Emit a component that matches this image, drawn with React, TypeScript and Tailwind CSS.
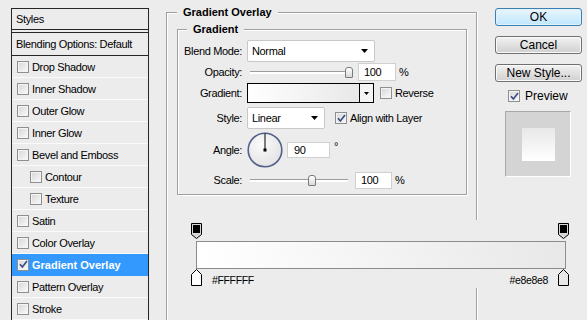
import React from 'react';

type StyleItem = { label: string; indent?: boolean; checked?: boolean; active?: boolean };

const styleItems: StyleItem[] = [
  { label: 'Drop Shadow' },
  { label: 'Inner Shadow' },
  { label: 'Outer Glow' },
  { label: 'Inner Glow' },
  { label: 'Bevel and Emboss' },
  { label: 'Contour', indent: true },
  { label: 'Texture', indent: true },
  { label: 'Satin' },
  { label: 'Color Overlay' },
  { label: 'Gradient Overlay', checked: true, active: true },
  { label: 'Pattern Overlay' },
  { label: 'Stroke' },
];

const Check = ({ checked = false }: { checked?: boolean }) => (
  <span className="flex h-[12px] w-[12px] shrink-0 items-center justify-center border border-[#8e8f8f] bg-linear-to-br from-[#d6d6d6] to-[#fbfbfb] shadow-[inset_0_0_0_1px_#f4f4f4]">
    {checked && (
      <svg width="9" height="9" viewBox="0 0 9 9">
        <path d="M1 4.2L3.4 7L8 1" fill="none" stroke="#3b4d84" strokeWidth="1.7" />
      </svg>
    )}
  </span>
);

const Arrow = () => (
  <svg width="7" height="4" viewBox="0 0 7 4">
    <path d="M0 0H7L3.5 4Z" fill="#000" />
  </svg>
);

// slider: left track, thumb, right track
const Slider = ({ left, right }: { left: string; right: string }) => (
  <div className="ml-[3px] flex h-[12px] items-center">
    <div className={`h-[3px] border-t border-[#9c9c9c] bg-white ${left}`} />
    <div className="h-[11px] w-[8px] shrink-0 rounded-t-[3px] rounded-b-[1px] border border-[#7a7a7a] bg-linear-to-b from-white to-[#d9d9d9]" />
    <div className={`h-[3px] border-t border-[#9c9c9c] bg-white ${right}`} />
  </div>
);

const TopStop = () => (
  <svg width="11" height="16" viewBox="0 0 11 16">
    <path d="M0.5 0.5H10.5V11.5L5.5 15.5L0.5 11.5Z" fill="#d8d8d8" stroke="#000" />
    <rect x="2" y="2" width="7" height="8" fill="#000" />
  </svg>
);

const BottomStop = ({ fill }: { fill: string }) => (
  <svg width="11" height="17" viewBox="0 0 11 17">
    <path d="M5.5 0.5L10.5 5.5V16.5H0.5V5.5Z" fill={fill} stroke="#000" />
  </svg>
);

const Button = ({ children, primary = false }: { children: React.ReactNode; primary?: boolean }) => (
  <div
    className={
      primary
        ? 'flex h-[18px] w-[87px] items-center justify-center rounded-[3px] border border-[#3c7fb1] bg-linear-to-b from-[#eaf6fd] to-[#bee6fd] text-[12px] tracking-normal shadow-[inset_0_0_0_1px_#dff2fc]'
        : 'flex h-[18px] w-[87px] items-center justify-center rounded-[3px] border border-[#707070] bg-linear-to-b from-[#f2f2f2] to-[#d0d0d0] text-[12px] tracking-normal shadow-[inset_0_0_0_1px_#fafafa]'
    }
  >
    {children}
  </div>
);

export default function App() {
  return (
    <div className="flex h-[320px] w-[587px] overflow-hidden bg-[#ececec] font-['Liberation_Sans',Arial,sans-serif] text-[11px] leading-[14px] tracking-[-0.35px] text-black">
      {/* styles list */}
      <aside className="w-[160px] shrink-0 pl-[11px] pt-[8px]">
        <div className="w-[138px] border-x border-t border-[#262626]">
          <div className="flex h-[21px] items-center border-b border-[#262626] pl-[4px]">Styles</div>
          <div className="mt-[2px] flex h-[24px] items-center border-y border-[#262626] pl-[4px]">
            Blending Options: Default
          </div>
          {styleItems.map((s) => (
            <div
              key={s.label}
              className={`flex h-[22px] items-center gap-[3px] border-b ${s.indent ? 'pl-[18px]' : 'pl-[5px]'} ${
                s.active ? 'border-[#3399ff] bg-[#3399ff] font-bold tracking-normal text-white' : 'border-[#fafafa]'
              }`}
            >
              <Check checked={s.checked} />
              <span>{s.label}</span>
            </div>
          ))}
        </div>
      </aside>

      <div className="flex flex-1 flex-col">
        <div className="flex h-[220px] shrink-0">
          <div className="w-[335px] shrink-0 pl-[6px] pt-[12px]">
            <section className="flex h-[208px] w-[311px] flex-col border-x border-t border-[#a0a0a0] shadow-[inset_1px_1px_0_#fff,1px_0_0_#fff]">
              <h2 className="-mt-[8px] ml-[10px] w-fit bg-[#ececec] px-[6px] font-bold tracking-normal">Gradient Overlay</h2>
              <div className="ml-[10px] mt-[10px] flex h-[166px] w-[290px] flex-col border border-[#a0a0a0] shadow-[inset_1px_1px_0_#fff,1px_1px_0_#fff]">
                <h3 className="-mt-[8px] ml-[9px] w-fit bg-[#ececec] px-[6px] font-bold tracking-normal">Gradient</h3>

                <div className="mt-[4px] flex h-[22px] items-center">
                  <span className="w-[64px] text-right">Blend Mode:</span>
                  <div className="ml-[5px] flex h-[22px] w-[128px] items-center justify-between rounded-[2px] border border-[#c8c8c8] bg-white pl-[4px] pr-[6px]">
                    <span>Normal</span>
                    <Arrow />
                  </div>
                </div>

                <div className="flex h-[20px] items-center">
                  <span className="w-[64px] text-right">Opacity:</span>
                  <div className="ml-[5px] flex items-center">
                    <Slider left="w-[95px]" right="w-0" />
                    <div className="ml-[5px] flex h-[18px] w-[38px] items-center border border-[#d0d0d0] bg-white pl-[5px]">100</div>
                    <span className="ml-[3px]">%</span>
                  </div>
                </div>

                <div className="mt-[1px] flex h-[20px] items-center">
                  <span className="w-[64px] text-right">Gradient:</span>
                  <div className="ml-[5px] flex h-[20px] w-[127px] border border-black bg-white">
                    <div className="flex-1 bg-linear-to-r from-white to-[#e8e8e8]" />
                    <div className="flex w-[14px] items-center justify-center border-l border-black bg-[#f4f4f4]">
                      <svg width="5" height="3" viewBox="0 0 5 3">
                        <path d="M0 0H5L2.5 3Z" fill="#000" />
                      </svg>
                    </div>
                  </div>
                  <span className="ml-[6px]">
                    <Check />
                  </span>
                  <span className="ml-[3px]">Reverse</span>
                </div>

                <div className="mt-[4px] flex h-[22px] items-center">
                  <span className="w-[64px] text-right">Style:</span>
                  <div className="ml-[5px] flex h-[22px] w-[78px] items-center justify-between rounded-[2px] border border-[#c8c8c8] bg-white pl-[4px] pr-[6px]">
                    <span>Linear</span>
                    <Arrow />
                  </div>
                  <span className="ml-[10px]">
                    <Check checked />
                  </span>
                  <span className="ml-[3px]">Align with Layer</span>
                </div>

                <div className="mt-[2px] flex h-[37px] items-center">
                  <span className="w-[64px] text-right">Angle:</span>
                  <svg className="ml-[5px]" width="36" height="36" viewBox="0 0 36 36">
                    <defs>
                      <radialGradient id="dial" cx="0.4" cy="0.35" r="0.7">
                        <stop offset="0" stopColor="#fbfbfb" />
                        <stop offset="1" stopColor="#e2e2e2" />
                      </radialGradient>
                    </defs>
                    <circle cx="18" cy="18" r="16.8" fill="url(#dial)" stroke="#51618a" strokeWidth="1.6" />
                    <line x1="18" y1="18" x2="18" y2="1.5" stroke="#000" strokeWidth="1" />
                    <rect x="16.5" y="16.5" width="3" height="3" fill="#000" />
                  </svg>
                  <div className="ml-[4px] flex h-[16px] w-[43px] items-center border border-[#d0d0d0] bg-white pl-[6px]">90</div>
                  <span className="ml-[4px] -mt-[8px]">°</span>
                </div>

                <div className="mt-[3px] flex h-[18px] items-center">
                  <span className="w-[64px] text-right">Scale:</span>
                  <div className="ml-[5px] flex items-center">
                    <Slider left="w-[58px]" right="w-[32px]" />
                    <div className="ml-[7px] flex h-[17px] w-[37px] items-center border border-[#d0d0d0] bg-white pl-[5px]">100</div>
                    <span className="ml-[3px]">%</span>
                  </div>
                </div>
              </div>
            </section>
          </div>

          <div className="flex w-[87px] flex-col gap-[10px] pt-[8px]">
            <Button primary>OK</Button>
            <Button>Cancel</Button>
            <Button>New Style...</Button>
            <div className="-mt-[4px] flex h-[16px] items-center gap-[5px] pl-[13px] text-[12px] tracking-normal">
              <Check checked />
              <span>Preview</span>
            </div>
            <div className="-mt-[3px] ml-[10px] flex h-[66px] w-[66px] items-center justify-center border border-[#a8a8a8] border-b-white border-r-white bg-[#d4d4d4]">
              <div className="h-[33px] w-[33px] bg-linear-to-t from-white to-[#e8e8e8]" />
            </div>
          </div>
        </div>

        <div className="ml-[6px] flex flex-1 flex-col border-l border-[#a0a0a0] shadow-[inset_1px_0_0_#fff]">
          {/* gradient editor */}
          <div className="h-[68px] shrink-0 pt-[3px]">
            <div className="ml-[24px] flex w-[378px] flex-col">
              <div className="flex h-[16px] justify-between">
                <TopStop />
                <TopStop />
              </div>
              <div className="ml-[5px] mt-[2px] h-[28px] w-[370px] border border-[#8c8c8c] bg-linear-to-r from-white to-[#e8e8e8]" />
              <div className="flex h-[17px] items-center">
                <BottomStop fill="#fff" />
                <span className="ml-[10px] mt-[4px] text-[10.5px]">#FFFFFF</span>
                <span className="flex-1" />
                <span className="mr-[10px] mt-[4px] text-[10.5px]">#e8e8e8</span>
                <BottomStop fill="#e8e8e8" />
              </div>
            </div>
          </div>
          <div className="w-[310px] flex-1 border-r border-[#a0a0a0] shadow-[1px_0_0_#fff]" />
        </div>
      </div>
    </div>
  );
}
